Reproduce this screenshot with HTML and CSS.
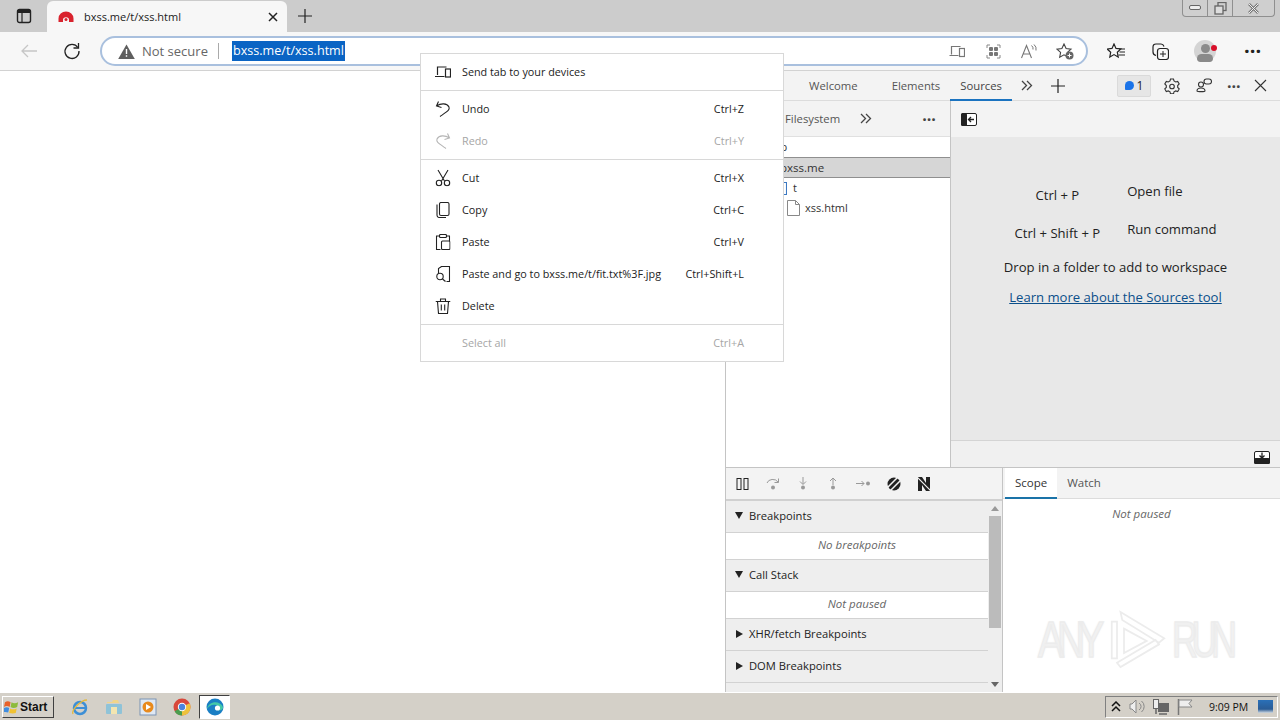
FILE: index.html
```html
<!DOCTYPE html>
<html>
<head>
	<meta charset="utf-8">
	<title>bxss.me/t/xss.html</title>
	<link rel="stylesheet" href="styles.css">
</head>
<body>
	<div class="tabbar">
		<svg class="sidebar-icon" width="16" height="16" viewBox="0 0 16 16"><rect x="1.5" y="1.5" width="13" height="13" rx="2" fill="none" stroke="#222" stroke-width="1.4"/><path d="M1.5 3.5a2 2 0 0 1 2-2h9a2 2 0 0 1 2 2V5h-13z" fill="#222"/><path d="M6 5v9.5" stroke="#222" stroke-width="1.2"/></svg>
		<div class="tab">
			<svg width="16" height="16" viewBox="0 0 16 16"><path d="M0.500 13V9.500a7.500 7 0 0 1 15 0V13h-4.500V11a3 2.800 0 0 0-6 0v2z" fill="#d9232e"/><circle cx="8" cy="10.500" r="1.500" fill="#d9232e"/></svg>
			<span class="tab-title">bxss.me/t/xss.html</span>
			<svg class="tab-close" width="10" height="10" viewBox="0 0 10 10"><path d="M1 1l8 8M9 1l-8 8" stroke="#222" stroke-width="1.500"/></svg>
		</div>
		<svg class="new-tab" width="16" height="16" viewBox="0 0 16 16"><path d="M8 1v14M1 8h14" stroke="#222" stroke-width="1.200"/></svg>
		<div class="window-buttons">
			<span class="window-button"><svg width="12" height="6" viewBox="0 0 12 6"><rect x="0.500" y="0.500" width="11" height="4" rx="1.500" fill="#eee" stroke="#666"/></svg></span>
			<span class="window-button"><svg width="13" height="13" viewBox="0 0 13 13"><rect x="4" y="0.500" width="8" height="8" fill="none" stroke="#666" stroke-width="1.300"/><rect x="1" y="4" width="8" height="8" fill="#ddd" stroke="#666" stroke-width="1.300"/></svg></span>
			<span class="window-button wide"><svg width="13" height="11" viewBox="0 0 13 11"><path d="M2 1l9 9M11 1l-9 9" stroke="#777" stroke-width="2.500"/><path d="M2 1l9 9M11 1l-9 9" stroke="#eee" stroke-width="1"/></svg></span>
		</div>
	</div>

	<div class="toolbar">
		<svg class="back" width="18" height="16" viewBox="0 0 18 16"><path d="M17 8H2M8 2L2 8l6 6" fill="none" stroke="#c6c6c6" stroke-width="1.300"/></svg>
		<svg class="reload" width="18" height="18" viewBox="0 0 18 18"><path d="M14.800 5.500A7 7 0 1 0 16 9" fill="none" stroke="#222" stroke-width="1.300"/><path d="M15.500 1v5h-5" fill="none" stroke="#222" stroke-width="1.300"/></svg>
		<div class="address">
			<svg class="warn" width="17" height="15" viewBox="0 0 17 15"><path d="M8.500 0.500L16.800 15H0.200z" fill="#5f5f5f"/><path d="M8.500 5v5M8.500 11.300v1.500" stroke="#fff" stroke-width="1.400"/></svg>
			<span class="not-secure">Not secure</span>
			<span class="address-divider"></span>
			<span class="url">bxss.me/t/xss.html</span>
			<span class="address-icons">
				<svg width="16" height="13" viewBox="0 0 16 13"><path d="M2.500 9.500V1.500h9M0.500 10.500h9" fill="none" stroke="#777" stroke-width="1.200"/><rect x="10.500" y="3.500" width="5" height="8" fill="none" stroke="#777" stroke-width="1.200"/></svg>
				<svg width="15" height="15" viewBox="0 0 15 15"><path d="M1 4V1h3M11 1h3v3M14 11v3h-3M4 14H1v-3" fill="none" stroke="#888"/><rect x="3" y="3" width="4" height="4" rx="1" fill="#777"/><rect x="8" y="3" width="4" height="4" rx="1" fill="#777"/><rect x="3" y="8" width="4" height="4" rx="1" fill="#777"/><rect x="8" y="8" width="4" height="4" rx="1" fill="#777"/></svg>
				<svg width="16" height="15" viewBox="0 0 16 15"><path d="M0.500 14L5.500 1.500 10.500 14M2.300 10h6.400" fill="none" stroke="#777" stroke-width="1.100"/><path d="M10.500 1.500a4 4 0 0 1 1.500 4M13 0.500a6 6 0 0 1 2 6" fill="none" stroke="#777"/></svg>
				<svg class="fav-add" width="18" height="17" viewBox="0 0 18 17"><path d="M8 1l2.100 4.500 4.900.6-3.600 3.300.9 4.800L8 11.800 3.700 14.200l.9-4.800L1 6.100l4.900-.6z" fill="none" stroke="#444" stroke-width="1.100"/><circle cx="13.500" cy="12.500" r="4" fill="#666"/><path d="M13.500 10.500v4M11.500 12.500h4" stroke="#fff"/></svg>
			</span>
		</div>
		<svg class="favorites" width="18" height="16" viewBox="0 0 18 16"><path d="M7 1l2 4.400 4.800.6-3.500 3.200.9 4.800L7 11.600 2.800 14l.9-4.800L.2 6l4.800-.6z" fill="none" stroke="#222" stroke-width="1.200"/><path d="M12 6h6M12.500 9h5.500M11.500 12h6.500" stroke="#222"/></svg>
		<svg class="collections" width="17" height="17" viewBox="0 0 17 17"><path d="M4 12.500C2 12 1 11 1 9V4c0-2 1-3 3-3h5c1.500 0 2.500 1 3 2.500" fill="none" stroke="#222" stroke-width="1.200"/><rect x="5.500" y="5.500" width="11" height="11" rx="2.500" fill="none" stroke="#222" stroke-width="1.200"/><path d="M11 8v6M8 11h6" stroke="#222"/></svg>
		<span class="avatar"><span class="avatar-head"></span><span class="avatar-body"></span><span class="avatar-dot"></span></span>
		<span class="more">···</span>
	</div>

	<div class="main">
		<div class="page"></div>
		<div class="devtools">
			<div class="dev-tabs">
				<span class="dev-tab welcome">Welcome</span>
				<span class="dev-tab">Elements</span>
				<span class="dev-tab active">Sources</span>
				<svg class="chevrons" width="12" height="11" viewBox="0 0 12 11"><path d="M1 1l4.500 4.500L1 10M6 1l4.500 4.500L6 10" fill="none" stroke="#444" stroke-width="1.300"/></svg>
				<svg class="dev-plus" width="16" height="16" viewBox="0 0 16 16"><path d="M8 1v14M1 8h14" stroke="#222" stroke-width="1.200"/></svg>
				<span class="issues"><span class="issue-dot"></span>1</span>
				<svg class="dev-gear" width="16" height="16" viewBox="0 0 16 16"><path d="M6.500 1h3l.5 2 1.700 1 2-.6 1.500 2.600-1.500 1.500v1.900l1.500 1.500-1.500 2.600-2-.6-1.700 1-.5 2h-3l-.5-2-1.700-1-2 .6L.8 10.900l1.500-1.500V7.500L.8 6l1.500-2.600 2 .6L6 3z" fill="none" stroke="#333" stroke-width="1.100"/><circle cx="8" cy="8.500" r="2.300" fill="none" stroke="#333" stroke-width="1.100"/></svg>
				<svg class="dev-people" width="16" height="15" viewBox="0 0 16 15"><circle cx="5" cy="6.500" r="2.500" fill="none" stroke="#333" stroke-width="1.100"/><path d="M1 13a4 3 0 0 1 8 0c0 1-8 1-8 0z" fill="none" stroke="#333" stroke-width="1.100"/><rect x="8" y="1" width="7.500" height="5" rx="2.500" fill="none" stroke="#333" stroke-width="1.100"/></svg>
				<span class="dev-more">···</span>
				<svg class="dev-close" width="13" height="13" viewBox="0 0 13 13"><path d="M1 1l11 11M12 1L1 12" stroke="#333" stroke-width="1.100"/></svg>
			</div>

			<div class="sources">
				<div class="navigator">
					<div class="nav-tabs">
						<span class="nav-tab">Filesystem</span>
						<svg width="12" height="11" viewBox="0 0 12 11"><path d="M1 1l4.500 4.500L1 10M6 1l4.500 4.500L6 10" fill="none" stroke="#444" stroke-width="1.300"/></svg>
						<span class="nav-more">···</span>
					</div>
					<div class="tree-row top-row">top</div>
					<div class="tree-row selected">bxss.me</div>
					<div class="tree-row folder-row">
						<svg width="14" height="13" viewBox="0 0 14 13"><path d="M0.500 2.500h4l1.500-2h7.500v12H0.500z" fill="none" stroke="#3b78c2" stroke-width="1.100"/></svg>
						t
					</div>
					<div class="tree-row file-row">
						<svg width="13" height="16" viewBox="0 0 13 16"><path d="M0.500 0.500h8l4 4v11h-12zM8.500 0.500v4h4" fill="none" stroke="#888"/></svg>
						xss.html
					</div>
				</div>
				<div class="editor">
					<div class="editor-bar">
						<svg width="16" height="13" viewBox="0 0 16 13"><rect x="0.500" y="0.500" width="15" height="12" rx="1.500" fill="#fff" stroke="#222"/><rect x="0" y="0" width="6" height="13" rx="1.500" fill="#222"/><path d="M13 6.500H8M10 4L7.500 6.500 10 9" fill="none" stroke="#222" stroke-width="1.300"/></svg>
					</div>
					<div class="editor-body">
						<div class="shortcuts">
							<span class="keys">Ctrl + P</span>
							<span class="action">Open file</span>
							<span class="keys">Ctrl + Shift + P</span>
							<span class="action">Run command</span>
						</div>
						<div class="drop">Drop in a folder to add to workspace</div>
						<a class="learn" href="#">Learn more about the Sources tool</a>
					</div>
					<div class="editor-foot">
						<svg width="16" height="13" viewBox="0 0 16 13"><rect x="0.500" y="0.500" width="15" height="12" rx="1.500" fill="#fff" stroke="#222"/><rect x="0" y="7" width="16" height="6" rx="1.500" fill="#222"/><path d="M8 1.500v5M5.500 4.500L8 7l2.500-2.500" fill="none" stroke="#222" stroke-width="1.300"/></svg>
					</div>
				</div>
			</div>

			<div class="debugger">
				<div class="debug-left">
					<div class="debug-bar">
						<svg width="14" height="12" viewBox="0 0 14 12"><rect x="1" y="0.500" width="4" height="11" fill="none" stroke="#222"/><rect x="8" y="0.500" width="4" height="11" fill="none" stroke="#222"/></svg>
						<svg width="14" height="13" viewBox="0 0 14 13"><path d="M1 6a6 5 0 0 1 11-1M12.500 1.500V5.500H8.500" fill="none" stroke="#999"/><circle cx="7" cy="10.500" r="2" fill="#999"/></svg>
						<svg width="14" height="13" viewBox="0 0 14 13"><path d="M7 0v7M4 4.500l3 3 3-3" fill="none" stroke="#999"/><circle cx="7" cy="10.500" r="2" fill="#999"/></svg>
						<svg width="14" height="13" viewBox="0 0 14 13"><path d="M7 8V1M4 4l3-3 3 3" fill="none" stroke="#999"/><circle cx="7" cy="10.500" r="2" fill="#999"/></svg>
						<svg width="15" height="13" viewBox="0 0 15 13"><path d="M0 6.500h8M5.500 4l2.500 2.500L5.500 9" fill="none" stroke="#999"/><circle cx="12" cy="6.500" r="2" fill="#999"/></svg>
						<svg width="14" height="14" viewBox="0 0 14 14"><circle cx="7" cy="7" r="6.500" fill="#222"/><path d="M1 10L10 1M4 13l9-9" stroke="#f3f3f3" stroke-width="1.500"/></svg>
						<svg width="14" height="14" viewBox="0 0 14 14"><path d="M1 0h4l4 6 0-6h4v14H9L5 8v6H1z" fill="#222"/><path d="M0 0l14 14" stroke="#f3f3f3" stroke-width="1.200"/></svg>
					</div>
					<div class="panes">
						<div class="pane-list">
							<div class="pane-head"><span class="arrow-down"></span>Breakpoints</div>
							<div class="pane-body">No breakpoints</div>
							<div class="pane-head"><span class="arrow-down"></span>Call Stack</div>
							<div class="pane-body">Not paused</div>
							<div class="pane-head"><span class="arrow-right"></span>XHR/fetch Breakpoints</div>
							<div class="pane-head"><span class="arrow-right"></span>DOM Breakpoints</div>
						</div>
						<div class="scrollbar">
							<span class="scroll-up"></span>
							<span class="scroll-thumb"></span>
							<span class="scroll-down"></span>
						</div>
					</div>
				</div>
				<div class="debug-right">
					<div class="scope-tabs">
						<span class="scope-tab active">Scope</span>
						<span class="scope-tab">Watch</span>
					</div>
					<div class="not-paused">Not paused</div>
				</div>
			</div>
		</div>
	</div>

	<div class="taskbar">
		<div class="start">
			<svg width="16" height="15" viewBox="0 0 17 15"><path d="M1 3q3-2 6 0l-1 5q-3-2-6 0z" fill="#e8622a"/><path d="M8 3q3 2 7 0l-1 5q-4 2-7 0z" fill="#8dbb3c"/><path d="M0 9q3-1.500 5.500 0l-1 5q-3-1.500-6 0z" fill="#3f8de0"/><path d="M6.500 9.500q3 2 7 0l-1 5q-3 1-7 0z" fill="#f1c232"/></svg>
			Start
		</div>
		<svg class="quick ie" width="18" height="18" viewBox="0 0 18 18"><circle cx="9" cy="10" r="6" fill="none" stroke="#3d8fd6" stroke-width="2.500"/><path d="M4 10h10" stroke="#3d8fd6" stroke-width="2"/><path d="M2 16C0 12 10 2 16 2" fill="none" stroke="#e5b93c" stroke-width="1.300"/></svg>
		<svg class="quick" width="18" height="18" viewBox="0 0 18 18"><path d="M2 4h5l1-2h5l1 3H2z" fill="#f0d58a"/><rect x="1" y="6" width="16" height="10" rx="1" fill="#8fc3d8"/><rect x="6" y="9" width="6" height="7" fill="#f3e5b0"/></svg>
		<svg class="quick" width="18" height="18" viewBox="0 0 18 18"><rect x="1" y="1" width="16" height="16" fill="#dfe8f3" stroke="#7b93b3"/><circle cx="9" cy="9" r="5.500" fill="#e88a1d"/><path d="M7 6l5 3-5 3z" fill="#fff"/></svg>
		<svg class="quick" width="18" height="18" viewBox="0 0 18 18"><circle cx="9" cy="9" r="8.500" fill="#d8483b"/><path d="M9 9L1.600 13.200A8.500 8.500 0 0 0 9 17.500z" fill="#4a9d4e"/><path d="M9 9l7.600-3.800A8.500 8.500 0 0 1 9 17.500z" fill="#eec23c"/><circle cx="9" cy="9" r="4.200" fill="#fff"/><circle cx="9" cy="9" r="3.200" fill="#4a84dd"/></svg>
		<span class="quick-active">
			<svg width="18" height="18" viewBox="0 0 18 18"><circle cx="9" cy="9" r="8.500" fill="#1a7fc4"/><path d="M1 11C2 4 13 1 17 9c.5 3-3.500 4-6 3 2-1 2-4-1-5C6 6 3 8 1 11z" fill="#43c8a8"/><circle cx="11.500" cy="10" r="2.600" fill="#fff"/></svg>
		</span>
		<div class="tray">
			<svg width="10" height="11" viewBox="0 0 10 11"><path d="M1 5l4-4 4 4M1 10l4-4 4 4" fill="none" stroke="#111" stroke-width="1.500"/></svg>
			<svg width="16" height="15" viewBox="0 0 16 15"><path d="M1 5h2l4-4v13l-4-4H1z" fill="#eee" stroke="#888"/><path d="M10 4a4 4 0 0 1 0 7M12.500 2a7 7 0 0 1 0 11" fill="none" stroke="#888"/></svg>
			<svg width="16" height="16" viewBox="0 0 16 16"><rect x="5" y="4" width="11" height="9" fill="#666"/><rect x="0.500" y="0.500" width="5" height="9" fill="#eee" stroke="#666"/><path d="M3 10v5M6 15h8" stroke="#666" stroke-width="1.500"/></svg>
			<svg width="16" height="16" viewBox="0 0 16 16"><path d="M1.500 0v16" stroke="#777" stroke-width="1.500"/><path d="M2 1h13l-3 3.500 3 3.500H2z" fill="#eee" stroke="#888"/></svg>
			<span class="clock">9:09 PM</span>
			<span class="show-desktop"></span>
		</div>
	</div>

	<div class="context-menu">
		<div class="menu-group">
			<div class="menu-item">
				<svg width="16" height="13" viewBox="0 0 16 13"><path d="M2.500 9.500V1.500h9M0 11h9.500" fill="none" stroke="#222" stroke-width="1.200"/><rect x="10.500" y="3.500" width="5" height="8" fill="none" stroke="#222" stroke-width="1.200"/></svg>
				<span class="menu-label">Send tab to your devices</span>
			</div>
		</div>
		<div class="menu-group">
			<div class="menu-item">
				<svg width="16" height="16" viewBox="0 0 16 16"><path d="M3.500 0.500L1.500 5l5 1.500M1.500 5C6 2 12 2 14 6c1 3-1 4-9 9.500" fill="none" stroke="#222" stroke-width="1.100"/></svg>
				<span class="menu-label">Undo</span><span class="menu-key">Ctrl+Z</span>
			</div>
			<div class="menu-item disabled">
				<svg width="16" height="16" viewBox="0 0 16 16"><path d="M12.500 0.500L14.500 5l-5 1.500M14.500 5C10 2 4 2 2 6c-1 3 1 4 9 9.500" fill="none" stroke="#b5b5b5" stroke-width="1.100"/></svg>
				<span class="menu-label">Redo</span><span class="menu-key">Ctrl+Y</span>
			</div>
		</div>
		<div class="menu-group">
			<div class="menu-item">
				<svg width="16" height="17" viewBox="0 0 16 17"><path d="M3 0.500l6.500 11M13 0.500l-6.500 11" stroke="#222" stroke-width="1.100"/><circle cx="4" cy="13.500" r="2.700" fill="none" stroke="#222" stroke-width="1.100"/><circle cx="12" cy="13.500" r="2.700" fill="none" stroke="#222" stroke-width="1.100"/></svg>
				<span class="menu-label">Cut</span><span class="menu-key">Ctrl+X</span>
			</div>
			<div class="menu-item">
				<svg width="14" height="16" viewBox="0 0 14 16"><rect x="3.500" y="0.500" width="9.500" height="13" rx="1.500" fill="none" stroke="#222" stroke-width="1.100"/><path d="M1 2.500V13a2.500 2.500 0 0 0 2.500 2.500H10" fill="none" stroke="#222" stroke-width="1.100"/></svg>
				<span class="menu-label">Copy</span><span class="menu-key">Ctrl+C</span>
			</div>
			<div class="menu-item">
				<svg width="15" height="16" viewBox="0 0 15 16"><path d="M3.500 2H1v13.500h4M11.500 2H14v5" fill="none" stroke="#222" stroke-width="1.100"/><rect x="4" y="0.500" width="7" height="3" rx="1" fill="none" stroke="#222" stroke-width="1.100"/><rect x="6" y="7" width="8.500" height="8.500" rx="1" fill="none" stroke="#222" stroke-width="1.100"/></svg>
				<span class="menu-label">Paste</span><span class="menu-key">Ctrl+V</span>
			</div>
			<div class="menu-item">
				<svg width="15" height="16" viewBox="0 0 15 16"><path d="M3 7V2.500L6 0.500h8v15h-3" fill="none" stroke="#222" stroke-width="1.100"/><circle cx="4.500" cy="10.500" r="3.200" fill="none" stroke="#222" stroke-width="1.100"/><path d="M7 13l3 2.500" stroke="#222" stroke-width="1.100"/></svg>
				<span class="menu-label">Paste and go to bxss.me/t/fit.txt%3F.jpg</span><span class="menu-key">Ctrl+Shift+L</span>
			</div>
			<div class="menu-item">
				<svg width="15" height="16" viewBox="0 0 15 16"><path d="M0 3.500h15M5 3.500V1h5v2.500M2 3.500l1 12h9l1-12M5.800 6.500v6M9.200 6.500v6" fill="none" stroke="#222" stroke-width="1.100"/></svg>
				<span class="menu-label">Delete</span>
			</div>
		</div>
		<div class="menu-group">
			<div class="menu-item disabled">
				<svg width="16" height="16" viewBox="0 0 16 16"></svg>
				<span class="menu-label">Select all</span><span class="menu-key">Ctrl+A</span>
			</div>
		</div>
	</div>

	<div class="watermark">
		<span class="mark-text">ANY</span>
		<svg width="56" height="62" viewBox="0 0 64 66"><path d="M2 12h6v42H2zM12 1l50 30-6 5L14 10zM56 38L12 64l-4-5 44-26zM16 20l26 14-26 14z" fill="none" stroke="#ececec" stroke-width="2"/></svg>
		<span class="mark-text run">RUN</span>
	</div>
</body>
</html>
```

FILE: styles.css
```css
* {
	box-sizing: border-box;
}

html, body {
	height: 100%;
}

body {
	margin: 0;
	width: 1280px;
	height: 720px;
	overflow: hidden;
	display: flex;
	flex-direction: column;
	position: relative;
	font-family: "Open Sans", "Liberation Sans", sans-serif;
	font-size: 11px;
	color: #222;
	background: #fff;
}

svg {
	display: block;
	flex: none;
}

/* tab strip */
.tabbar {
	height: 32px;
	flex: none;
	display: flex;
	align-items: flex-end;
	background: #cccccc;
}

.sidebar-icon {
	margin: 0 0 8px 16px;
}

.tab {
	width: 240px;
	height: 31px;
	margin-left: 15px;
	padding: 0 11px;
	display: flex;
	align-items: center;
	background: #f7f7f7;
	border-radius: 6px 6px 0 0;
}

.tab-title {
	margin-left: 10px;
	font-size: 11px;
	color: #222;
}

.tab-close {
	margin-left: auto;
	margin-right: -2px;
}

.new-tab {
	margin: 0 0 8px 10px;
}

.window-buttons {
	margin-left: auto;
	margin-right: 5px;
	align-self: flex-start;
	height: 17px;
	display: flex;
	background: #cfcfcf;
	border: 1px solid #8f8f8f;
	border-top: none;
	border-radius: 0 0 4px 4px;
}

.window-button {
	width: 25px;
	display: flex;
	align-items: center;
	justify-content: center;
	border-right: 1px solid #8f8f8f;
}

.window-button.wide {
	width: 41px;
	border-right: none;
}

/* address row */
.toolbar {
	height: 39px;
	flex: none;
	display: flex;
	align-items: center;
	background: #f7f7f7;
	border-bottom: 1px solid #d2d2d2;
}

.back {
	margin-left: 20px;
}

.reload {
	margin-left: 25px;
}

.address {
	width: 988px;
	height: 30px;
	margin-left: 19px;
	padding: 0 12px 0 16px;
	display: flex;
	align-items: center;
	background: #fff;
	border: 2px solid #a9c0de;
	border-radius: 15px;
}

.not-secure {
	margin-left: 7px;
	font-size: 13px;
	color: #666;
}

.address-divider {
	width: 1px;
	height: 16px;
	margin: 0 13px 0 10px;
	background: #aaa;
}

.url {
	height: 20px;
	line-height: 20px;
	padding: 0 1px;
	font-size: 12.600px;
	color: #fff;
	background: #0a64c4;
}

.address-icons {
	margin-left: auto;
	display: flex;
	align-items: center;
	gap: 20.500px;
}

.fav-add {
	margin-left: -1.500px;
}

.favorites {
	margin-left: 19px;
}

.collections {
	margin-left: 27px;
}

.avatar {
	width: 22px;
	height: 22px;
	margin-left: 25px;
	position: relative;
	background: #d4d4d4;
	border-radius: 50%;
	overflow: visible;
}

.avatar-head {
	position: absolute;
	left: 7px;
	top: 4px;
	width: 9px;
	height: 9px;
	border-radius: 50%;
	background: #8a8a8a;
}

.avatar-body {
	position: absolute;
	left: 3px;
	top: 14px;
	width: 16px;
	height: 8px;
	border-radius: 8px 8px 6px 6px;
	background: #8a8a8a;
}

.avatar-dot {
	position: absolute;
	left: 17px;
	top: 5px;
	width: 6px;
	height: 6px;
	border-radius: 50%;
	background: #d8102a;
}

.more {
	margin-left: 28px;
	font-size: 20px;
	font-weight: bold;
	line-height: 20px;
	color: #222;
}

/* content */
.main {
	flex: 1;
	min-height: 0;
	display: flex;
}

.page {
	width: 725px;
	background: #fff;
}

.devtools {
	width: 555px;
	display: flex;
	flex-direction: column;
	border-left: 1px solid #c4c4c4;
}

.dev-tabs {
	height: 30px;
	flex: none;
	display: flex;
	align-items: center;
	padding-left: 73px;
	background: #f3f3f3;
	border-bottom: 1px solid #dcdcdc;
}

.dev-tab {
	height: 30px;
	line-height: 30px;
	padding: 0 10px;
	font-size: 11.300px;
	color: #555;
}

.dev-tab.welcome {
	margin-right: 14px;
}

.dev-tab.active {
	color: #444;
	border-bottom: 2px solid #1a73c0;
}

.chevrons {
	margin-left: 9px;
}

.dev-plus {
	margin-left: 17px;
}

.issues {
	width: 34px;
	height: 22px;
	margin-left: 51px;
	display: flex;
	align-items: center;
	justify-content: center;
	gap: 3px;
	font-size: 12px;
	background: #e6e6e6;
	border: 1px solid #dadada;
	border-radius: 2px;
}

.issue-dot {
	width: 9px;
	height: 9px;
	border-radius: 50% 50% 50% 10%;
	background: #1a73e8;
}

.dev-gear {
	margin-left: 13px;
}

.dev-people {
	margin-left: 16px;
}

.dev-more {
	margin-left: 15px;
	font-size: 16px;
	font-weight: bold;
	color: #444;
}

.dev-close {
	margin-left: 13px;
}

.sources {
	height: 367px;
	flex: none;
	display: flex;
	border-bottom: 1px solid #c4c4c4;
}

.navigator {
	width: 224px;
	background: #fff;
}

.nav-tabs {
	height: 36px;
	display: flex;
	align-items: center;
	padding-left: 59px;
	background: #f3f3f3;
	border-bottom: 1px solid #e0e0e0;
	font-size: 11.300px;
	color: #555;
}

.nav-tab + svg {
	margin-left: 20px;
}

.nav-more {
	margin-left: 50px;
	font-size: 16px;
	font-weight: bold;
	color: #444;
}

.tree-row {
	height: 20px;
	line-height: 20px;
	font-size: 11px;
	color: #333;
	white-space: nowrap;
}

.top-row {
	padding-left: 44px;
}

.selected {
	height: 21px;
	padding-left: 54px;
	font-size: 11.500px;
	background: #d6d6d6;
	border-top: 1px solid #8f8f8f;
	border-bottom: 1px solid #8f8f8f;
}

.folder-row {
	display: flex;
	align-items: center;
	gap: 6px;
	padding-left: 47px;
}

.file-row {
	display: flex;
	align-items: center;
	gap: 5px;
	padding-left: 61px;
}

.editor {
	flex: 1;
	display: flex;
	flex-direction: column;
	border-left: 1px solid #c4c4c4;
	background: #e8e8e8;
}

.editor-bar {
	height: 36px;
	flex: none;
	display: flex;
	align-items: center;
	padding-left: 10px;
	background: #f3f3f3;
}

.editor-body {
	flex: 1;
	display: flex;
	flex-direction: column;
	align-items: center;
	padding-top: 45px;
	font-size: 13.100px;
	color: #222;
}

.shortcuts {
	display: grid;
	grid-template-columns: auto auto;
	grid-auto-rows: 38px;
	column-gap: 27px;
}

.keys {
	margin-top: 4px;
	text-align: center;
}

.action {
	line-height: 18px;
}

.drop {
	line-height: 18px;
}

.learn {
	margin-top: 12px;
	line-height: 18px;
	color: #0b4f8a;
}

.editor-foot {
	height: 27px;
	flex: none;
	display: flex;
	align-items: center;
	justify-content: flex-end;
	padding: 6px 10px 0 0;
	background: #f0f0f0;
	border-top: 1px solid #d4d4d4;
}

/* debugger */
.debugger {
	flex: 1;
	min-height: 0;
	display: flex;
}

.debug-left {
	width: 277px;
	display: flex;
	flex-direction: column;
	border-right: 1px solid #c4c4c4;
}

.debug-bar {
	height: 33px;
	flex: none;
	display: flex;
	align-items: center;
	gap: 16px;
	padding-left: 10px;
	background: #f3f3f3;
	border-bottom: 2px solid #d0d0d0;
}

.panes {
	flex: 1;
	min-height: 0;
	display: flex;
	background: #eeeeee;
}

.pane-list {
	width: 262px;
	overflow: hidden;
}

.pane-head {
	height: 32px;
	padding: 0 0 2px 9px;
	display: flex;
	align-items: center;
	font-size: 11.200px;
	color: #222;
	background: #eeeeee;
	border-bottom: 1px solid #d2d2d2;
}

.arrow-down {
	width: 0;
	height: 0;
	margin-right: 6px;
	border-left: 4.500px solid transparent;
	border-right: 4.500px solid transparent;
	border-top: 7px solid #222;
}

.arrow-right {
	width: 0;
	height: 0;
	margin-left: 1px;
	margin-right: 6px;
	border-top: 4.500px solid transparent;
	border-bottom: 4.500px solid transparent;
	border-left: 7px solid #222;
}

.pane-body {
	height: 27px;
	line-height: 24px;
	text-align: center;
	font-size: 11.500px;
	font-style: italic;
	color: #666;
	background: #fff;
	border-bottom: 1px solid #d2d2d2;
}

.scrollbar {
	width: 14px;
	position: relative;
	background: #eeeeee;
}

.scroll-thumb {
	position: absolute;
	left: 1px;
	top: 15px;
	width: 12px;
	height: 112px;
	background: #bbbbbb;
}

.scroll-up, .scroll-down {
	position: absolute;
	left: 3px;
	width: 0;
	height: 0;
	border-left: 4px solid transparent;
	border-right: 4px solid transparent;
}

.scroll-up {
	top: 5px;
	border-bottom: 5px solid #999;
}

.scroll-down {
	bottom: 5px;
	border-top: 5px solid #666;
}

.debug-right {
	flex: 1;
	background: #fff;
}

.scope-tabs {
	height: 31px;
	display: flex;
	padding-left: 2px;
	background: #f3f3f3;
	border-bottom: 1px solid #dcdcdc;
}

.scope-tab {
	height: 31px;
	line-height: 30px;
	padding: 0 10px;
	font-size: 11.500px;
	color: #555;
}

.scope-tab.active {
	color: #333;
	background: #fff;
	border-bottom: 2px solid #1a73a8;
}

.not-paused {
	margin-top: 5px;
	line-height: 20px;
	text-align: center;
	font-size: 11.500px;
	font-style: italic;
	color: #666;
}

/* taskbar */
.taskbar {
	height: 28px;
	flex: none;
	display: flex;
	align-items: center;
	background: #d4d0c8;
	border-top: 1px solid #fff;
}

.start {
	width: 52px;
	height: 22px;
	margin-left: 2px;
	display: flex;
	align-items: center;
	gap: 0;
	padding-left: 1px;
	font-family: "Liberation Sans", sans-serif;
	font-size: 12px;
	font-weight: bold;
	color: #111;
	border: 1px solid #fff;
	border-right-color: #404040;
	border-bottom-color: #404040;
}

.quick {
	margin-right: 16px;
}

.ie {
	margin-left: 17px;
}

.quick-active {
	width: 31px;
	height: 24px;
	margin-left: -8px;
	display: flex;
	align-items: center;
	justify-content: center;
	background: #fff;
	border: 1px solid #fff;
	border-top-color: #404040;
	border-left-color: #404040;
}

.tray {
	width: 173px;
	height: 22px;
	margin-left: auto;
	margin-right: 2px;
	display: flex;
	align-items: center;
	gap: 8px;
	padding-left: 5px;
	border: 1px solid #fff;
	border-top-color: #808080;
	border-left-color: #808080;
}

.clock {
	margin-left: 8px;
	font-size: 10.500px;
	color: #111;
}

.show-desktop {
	width: 15px;
	height: 13px;
	margin-left: 2px;
	background: linear-gradient(#2a70b8, #2a5c96 70%, #cfd8e0);
}

/* address bar context menu */
.context-menu {
	position: absolute;
	left: 420px;
	top: 53px;
	width: 364px;
	background: #fff;
	border: 1px solid #d8d8d8;
}

.menu-group {
	padding: 2px 0;
	border-bottom: 1px solid #d8d8d8;
}

.menu-group:last-child {
	border-bottom: none;
}

.menu-item {
	height: 32px;
	display: flex;
	align-items: center;
	padding: 0 39px 2px 41px;
	font-size: 10.800px;
	color: #222;
	position: relative;
}

.menu-item svg {
	position: absolute;
	left: 22px;
	top: 50%;
	transform: translate(-50%, -50%);
}

.menu-key {
	margin-left: auto;
}

.disabled {
	color: #a6a6a6;
}

.watermark {
	position: absolute;
	left: 1038px;
	top: 609px;
	display: flex;
	align-items: center;
	gap: 6px;
	pointer-events: none;
}

.mark-text {
	width: 66px;
	font-family: "Liberation Sans", sans-serif;
	font-size: 50px;
	line-height: 60px;
	letter-spacing: -9px;
	color: rgba(255, 255, 255, 0);
	-webkit-text-stroke: 1.500px #ececec;
	text-shadow: 0 0 3px #eeeeee;
	transform: scaleX(0.78);
	transform-origin: left center;
	white-space: nowrap;
}

.mark-text.run {
	transform: scaleX(0.72);
}
```
